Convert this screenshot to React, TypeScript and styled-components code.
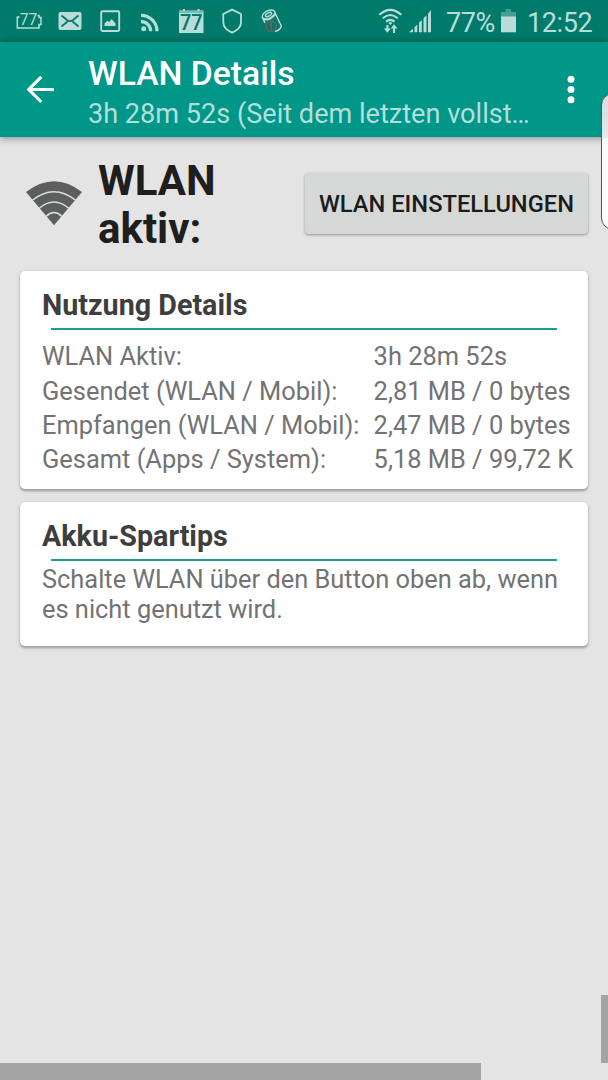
import React from "react";
import styled, { createGlobalStyle } from "styled-components";

const GlobalStyle = createGlobalStyle`
  * { box-sizing: border-box; }
  html, body { margin: 0; padding: 0; background: #e4e4e4; }
  body { font-family: Roboto, "Noto Sans", sans-serif; overflow: hidden; }
  h1, h2, p, dl, dt, dd { margin: 0; font-weight: 400; }
`;

const Screen = styled.div`
  position: relative;
  width: 608px;
  height: 1080px;
  overflow: hidden;
  background: #e4e4e4;
`;

const StatusBar = styled.div`
  display: flex;
  align-items: center;
  justify-content: space-between;
  height: 42px;
  padding: 0 17px 0 15px;
  background: #007a6b;
  color: #b8ddd8;
`;

const Notifications = styled.div`
  display: flex;
  align-items: center;
  gap: 12.5px;
`;

const SystemStatus = styled.div`
  display: flex;
  align-items: center;
`;

const Icon = styled.svg<{ $ml?: number }>`
  display: block;
  flex: none;
  margin-left: ${(p) => p.$ml ?? 0}px;
`;

const StatusText = styled.span<{ $ml: number; $w: number; $ls?: number }>`
  margin-left: ${(p) => p.$ml}px;
  width: ${(p) => p.$w}px;
  font-size: 27px;
  line-height: 32px;
  letter-spacing: ${(p) => p.$ls ?? 0}px;
  white-space: nowrap;
  padding-top: 3px;
`;

const AppBar = styled.header`
  position: relative;
  display: flex;
  align-items: center;
  height: 95px;
  padding: 0 25px 0 27px;
  background: #009688;
  box-shadow: 0 1px 8px rgba(0, 0, 0, 0.42);
  color: #fff;
`;

const BarTitles = styled.div`
  width: 446px;
  margin-left: 34px;
  margin-right: auto;
  padding-top: 5px;
`;

const Title = styled.h1`
  font-size: 33.7px;
  font-weight: 500;
  line-height: 40px;
  white-space: nowrap;
`;

const Subtitle = styled.p`
  padding-top: 3px;
  font-size: 27.1px;
  line-height: 34px;
  color: #b2dfdb;
  overflow: hidden;
  white-space: nowrap;
`;

const Hero = styled.section`
  display: flex;
  align-items: center;
  height: 134px;
  padding: 0 20px 0 25px;
`;

const HeroTitle = styled.h2`
  width: 170px;
  margin-left: 15px;
  margin-right: auto;
  padding-top: 2px;
  font-size: 42px;
  font-weight: 700;
  line-height: 48px;
  color: #1e1e1e;
`;

const SettingsButton = styled.button`
  width: 283px;
  height: 61px;
  margin-bottom: 2px;
  padding: 1px 0 0;
  border: 0;
  border-radius: 4px;
  background: #d6d8d7;
  box-shadow: 0 1px 3px rgba(0, 0, 0, 0.36);
  font: 500 23.7px Roboto, sans-serif;
  color: #1b1b1b;
  white-space: nowrap;
`;

const Card = styled.section<{ $h: number }>`
  height: ${(p) => p.$h}px;
  margin: 0 20px 13px;
  padding: 16px 0 0 22px;
  border-radius: 5px;
  background: #fff;
  box-shadow: 0 1.5px 3px rgba(0, 0, 0, 0.34);
`;

const CardTitle = styled.h2`
  font-size: 28.7px;
  font-weight: 700;
  line-height: 36px;
  color: #3e3e3e;
`;

const Divider = styled.div`
  width: 506px;
  height: 2px;
  margin: 5px 0 0 9px;
  background: #1a9f92;
`;

const Stats = styled.dl`
  display: grid;
  grid-template-columns: 331.6px auto;
  grid-auto-rows: 34.2px;
  margin-top: 9.4px;
  font-size: 25.43px;
  line-height: 34.2px;
  color: #737373;
  white-space: nowrap;
`;

const Tip = styled.p`
  margin-top: 3px;
  font-size: 25.4px;
  line-height: 30px;
  color: #737373;
  white-space: nowrap;
`;

const EdgeHandle = styled.div`
  position: absolute;
  left: 601px;
  top: 93px;
  width: 24px;
  height: 137px;
  border: 1px solid #555;
  border-radius: 13px;
  background: linear-gradient(to bottom, #dcdcdc 0, #e6e6e6 43px, #fafafa 45px, #fff 100%);
`;

const ScrollMark = styled.div<{ $x: number; $y: number; $w: number; $h: number }>`
  position: absolute;
  left: ${(p) => p.$x}px;
  top: ${(p) => p.$y}px;
  width: ${(p) => p.$w}px;
  height: ${(p) => p.$h}px;
  background: #a4a4a4;
`;

const stats = [
  ["WLAN Aktiv:", "3h 28m 52s"],
  ["Gesendet (WLAN / Mobil):", "2,81 MB / 0 bytes"],
  ["Empfangen (WLAN / Mobil):", "2,47 MB / 0 bytes"],
  ["Gesamt (Apps / System):", "5,18 MB / 99,72 K"],
];

const LIGHT = "#b8ddd8";

function NotificationIcons() {
  return (
    <Notifications>
      <Icon width="28" height="20" viewBox="15 11 28 20">
        <path d="M19.5 17H17.3V28H39V24.5H41V17.5H39V15.5H37.5" fill="none" stroke={LIGHT} strokeWidth="1.5" />
        <text x="19.8" y="25" fontSize="16.3" textLength="17.5" lengthAdjust="spacingAndGlyphs" fontFamily="Roboto" fill={LIGHT}>77</text>
      </Icon>
      <Icon width="28" height="20" viewBox="55.5 11 28 20">
        <rect x="58" y="12" width="23" height="18" rx="2" fill={LIGHT} />
        <path d="M61 15.5L66.5 20Q69.5 22.3 72.5 20L78 15.5M61 26.5L67 21.5M78 26.5L72 21.5" fill="none" stroke="#007a6b" strokeWidth="1.7" />
      </Icon>
      <Icon width="28" height="24" viewBox="96 9 28 24">
        <rect x="101.2" y="11.2" width="18" height="19.8" rx="1.2" fill="none" stroke={LIGHT} strokeWidth="1.9" />
        <path d="M104.5 26V23.5L107.5 20.5L109 22.2L111.7 19L115.5 23.5V26Z" fill={LIGHT} />
      </Icon>
      <Icon width="28" height="24" viewBox="136.5 9 28 24">
        <circle cx="143.2" cy="28.8" r="2.5" fill={LIGHT} />
        <path d="M140.5 21.7A9.6 9.6 0 0 1 150.2 31.3M140.5 15.3A16 16 0 0 1 156.5 31.3" fill="none" stroke={LIGHT} strokeWidth="3.2" />
      </Icon>
      <Icon width="28" height="28" viewBox="177 7 28 28">
        <path d="M179 10.5H183V9H185V10.5H197.5V9H199.5V10.5H203.5V33H179Z" fill={LIGHT} />
        <path d="M179 12H203.5" stroke="#65aea5" strokeWidth="1.5" />
        <text x="180" y="30" textLength="22.5" lengthAdjust="spacingAndGlyphs" fontSize="21.5" fontWeight="500" fontFamily="Roboto" fill="#007a6b">77</text>
      </Icon>
      <Icon width="28" height="28" viewBox="217.5 7 28 28">
        <path d="M231.6 9.6L240.5 14V22.5Q240.5 28.6 231.6 32.6Q222.8 28.6 222.8 22.5V14Z" fill="none" stroke={LIGHT} strokeWidth="1.8" />
      </Icon>
      <Icon width="28" height="28" viewBox="258 7 28 28">
        <g fill="none" stroke={LIGHT} strokeWidth="1.4">
          <ellipse cx="268.5" cy="14.5" rx="6.8" ry="3.7" transform="rotate(-28 268.5 14.5)" />
          <ellipse cx="268.5" cy="14.5" rx="3.4" ry="1.6" transform="rotate(-28 268.5 14.5)" />
          <path d="M262.2 17L265 23M274.4 11.5L281.3 26Q280.5 30 275 31.5M263.2 19.5Q269.5 21 275.5 14.5" />
        </g>
        <circle cx="271.2" cy="26.2" r="5.2" fill="none" stroke="#805e58" strokeWidth="1.3" />
        <path d="M271.2 22.7V27M271.2 28.3V29.8" stroke="#8d5f59" strokeWidth="1.6" />
      </Icon>
    </Notifications>
  );
}

function StatusIcons() {
  return (
    <SystemStatus>
      <Icon width="24" height="26" viewBox="378 8 24 26">
        <g fill="none" stroke={LIGHT} strokeWidth="2.1">
          <path d="M379.3 14.8Q390.3 4.8 401.3 14.8M382.8 18.3Q390.3 11.7 397.8 18.3M386 21.6Q390.3 18 394.6 21.6" />
          <path d="M387.4 25V31M394 33V26" />
        </g>
        <path d="M388.3 23L390.3 21.8L392.3 23L390.3 25Z" fill={LIGHT} />
        <path d="M384 28.5H390.8L387.4 32.7ZM390.7 28.4H397.5L394 24.2Z" fill={LIGHT} />
      </Icon>
      <Icon $ml={6} width="24" height="26" viewBox="408 8 24 26">
        <path d="M409 32.3L413 28.7V32.3ZM414.5 27.3L417.3 24.5V32.3H414.5ZM419 22.8L421.8 20V32.3H419ZM423.5 18.3L426.5 15.3V32.3H423.5ZM428 13.8L431 10V32.3H428Z" fill={LIGHT} />
      </Icon>
      <StatusText $ml={14} $w={51} $ls={-0.4}>77%</StatusText>
      <Icon $ml={3} width="18" height="26" viewBox="500 8 18 26">
        <path d="M501 12H505.5V9H511V12H516V17H501Z" fill="#449f93" />
        <rect x="501" y="16.5" width="15" height="15.8" fill={LIGHT} />
      </Icon>
      <StatusText $ml={9} $w={64} $ls={-0.4}>12:52</StatusText>
    </SystemStatus>
  );
}

export default function App() {
  return (
    <>
      <GlobalStyle />
      <Screen>
        <StatusBar>
          <NotificationIcons />
          <StatusIcons />
        </StatusBar>
        <AppBar>
          <Icon width="27" height="28" viewBox="27 76 27 28">
            <path d="M54 89.5H29M41.3 76.8L28.8 89.5L41.3 102" fill="none" stroke="#fff" strokeWidth="3.1" />
          </Icon>
          <BarTitles>
            <Title>WLAN Details</Title>
            <Subtitle>3h 28m 52s (Seit dem letzten vollst…</Subtitle>
          </BarTitles>
          <Icon width="24" height="30" viewBox="559 75 24 30">
            <circle cx="571" cy="79.3" r="3.5" fill="#fff" />
            <circle cx="571" cy="89.5" r="3.5" fill="#fff" />
            <circle cx="571" cy="99.7" r="3.5" fill="#fff" />
          </Icon>
        </AppBar>
        <Hero>
          <Icon width="58" height="46" viewBox="25 181 58 46">
            <path d="M26 192Q54 170.5 82 192L54 225.3Z" fill="#5d5f5e" />
            <path d="M32 200.5Q54 183 76 200.5M39 208.5Q54 195.5 69 208.5M46 216.5Q54 208.5 62 216.5" fill="none" stroke="#dcdcdc" strokeWidth="1.5" />
          </Icon>
          <HeroTitle>WLAN aktiv:</HeroTitle>
          <SettingsButton>WLAN EINSTELLUNGEN</SettingsButton>
        </Hero>
        <Card $h={218}>
          <CardTitle>Nutzung Details</CardTitle>
          <Divider />
          <Stats>
            {stats.map(([label, value]) => (
              <React.Fragment key={label}>
                <dt>{label}</dt>
                <dd>{value}</dd>
              </React.Fragment>
            ))}
          </Stats>
        </Card>
        <Card $h={144}>
          <CardTitle>Akku-Spartips</CardTitle>
          <Divider />
          <Tip>
            Schalte WLAN über den Button oben ab, wenn
            <br />
            es nicht genutzt wird.
          </Tip>
        </Card>
        <EdgeHandle />
        <ScrollMark $x={601} $y={995} $w={7} $h={68} />
        <ScrollMark $x={0} $y={1063} $w={481} $h={17} />
      </Screen>
    </>
  );
}
